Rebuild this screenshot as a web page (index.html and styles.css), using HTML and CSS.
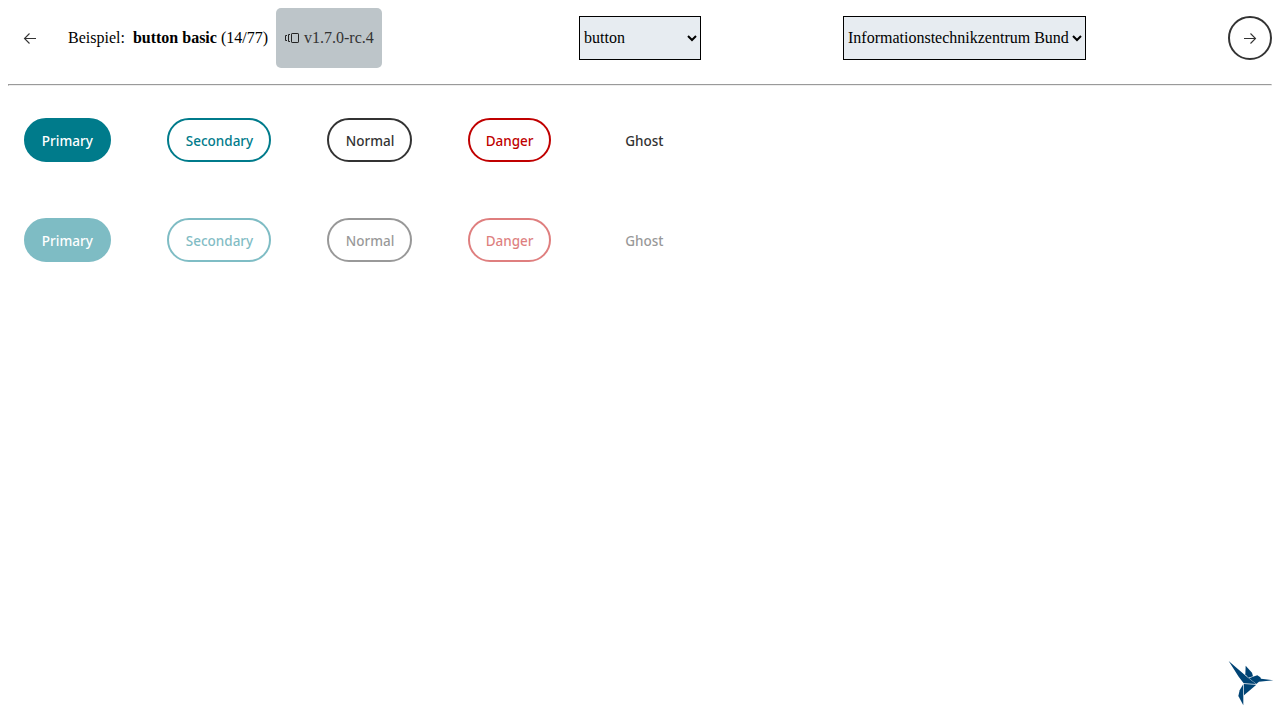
FILE: index.html
```html
<!DOCTYPE html>
<html lang="de">
<head>
<meta charset="utf-8">
<title>button basic</title>
<link rel="stylesheet" href="styles.css">
</head>
<body>
<header class="toolbar">
  <div class="example">
    <button class="round round-ghost" aria-label="Zurück"><svg width="14" height="14" viewBox="0 0 14 14"><path d="M13 7.5H1.5M6.5 2.5l-5 5 5 5"/></svg></button>
    <span class="label">Beispiel:</span>
    <span class="title"><b>button basic</b> (14/77)</span>
    <span class="version"><svg width="16" height="12" viewBox="0 0 16 12"><rect x="7.5" y="1.5" width="7" height="9" rx=".6"/><path d="M6 2.5H4.5v7H6M3 3.5H1.5v5H3"/></svg>v1.7.0-rc.4</span>
  </div>
  <select class="select select-component"><option>button</option></select>
  <select class="select select-theme"><option>Informationstechnikzentrum Bund</option></select>
  <button class="round" aria-label="Weiter"><svg width="14" height="14" viewBox="0 0 14 14"><path d="M1 7.5h11.5M7.5 2.5l5 5-5 5"/></svg></button>
</header>
<hr class="rule">
<main class="samples">
  <div class="row">
    <button class="btn primary"><span class="text">Primary</span></button>
    <button class="btn secondary"><span class="text">Secondary</span></button>
    <button class="btn normal"><span class="text">Normal</span></button>
    <button class="btn danger"><span class="text">Danger</span></button>
    <button class="btn ghost"><span class="text">Ghost</span></button>
  </div>
  <div class="row">
    <button class="btn primary" disabled><span class="text">Primary</span></button>
    <button class="btn secondary" disabled><span class="text">Secondary</span></button>
    <button class="btn normal" disabled><span class="text">Normal</span></button>
    <button class="btn danger" disabled><span class="text">Danger</span></button>
    <button class="btn ghost" disabled><span class="text">Ghost</span></button>
  </div>
</main>
<svg class="bird" width="58" height="58" viewBox="0 0 174 174">
  <path d="M20 18L78 68 102 87 65 85 50 65Z"/>
  <path d="M71 32L90 53 93 64 79 68 70 58Z"/>
  <path d="M81 70L97 64 106 61 115 67 118 74 103 87Z"/>
  <path d="M117 71L154 76 111 80Z"/>
  <path d="M66 87L103 89 66 121Z"/>
  <path d="M64 87V151L49 123 53 106Z"/>
</svg>
</body>
</html>
```
FILE: styles.css
```css
body {
  margin: 8px;
  font: 16px "Liberation Serif", serif;
  color: #000;
  background: #fff;
}
.toolbar {
  display: flex;
  align-items: center;
  justify-content: space-between;
  height: 60px;
}
.example {
  display: flex;
  align-items: center;
  width: 429px;
  white-space: nowrap;
}
.label { margin: 0 8px 0 16px; }
.title { margin-right: 8px; }
.version {
  display: flex;
  align-items: center;
  gap: 4px;
  box-sizing: border-box;
  width: 106px;
  height: 60px;
  padding-left: 8px;
  border-radius: 5px;
  background: #bdc5c9;
  color: #333;
}
svg { flex: none; }
.version svg, .round svg {
  fill: none;
  stroke: #222;
  stroke-width: 1;
}
.round svg { stroke: #333; stroke-width: 1.1; }
.round {
  display: flex;
  align-items: center;
  justify-content: center;
  box-sizing: border-box;
  width: 44px;
  height: 44px;
  padding: 0;
  border: 2px solid #333;
  border-radius: 50%;
  background: none;
}
.round-ghost { border-color: transparent; }
.select {
  box-sizing: border-box;
  height: 44px;
  margin: 0;
  padding: 0 0 1px;
  border: 1px solid #000;
  border-radius: 0;
  background: #e7ecf1;
  color: #000;
  font: 16px "Liberation Serif", serif;
}
.select-component { width: 122px; }
.select-theme { width: 243px; }
.rule { margin: 16px 0 0; }
.samples {
  display: grid;
  gap: 56px;
  padding: 32px 16px;
}
.row {
  display: flex;
  gap: 56px;
}
.btn {
  display: flex;
  align-items: center;
  justify-content: center;
  box-sizing: border-box;
  height: 44px;
  padding: 0;
  border: 2px solid currentColor;
  border-radius: 22px;
  background: none;
  font: 500 15px "Noto Sans", sans-serif;
  white-space: nowrap;
}
.text { transform: scaleX(.9); }
.btn:disabled { opacity: .5; }
.primary {
  width: 87px;
  border-color: #007b8b;
  background: #007b8b;
  color: #fff;
}
.secondary { width: 104px; color: #007b8b; }
.normal { width: 85px; color: #333; }
.danger { width: 83px; color: #c00000; }
.ghost { width: 75px; border-color: transparent; color: #333; }
.bird {
  position: fixed;
  right: 0;
  bottom: 7px;
  fill: #004475;
}
```
